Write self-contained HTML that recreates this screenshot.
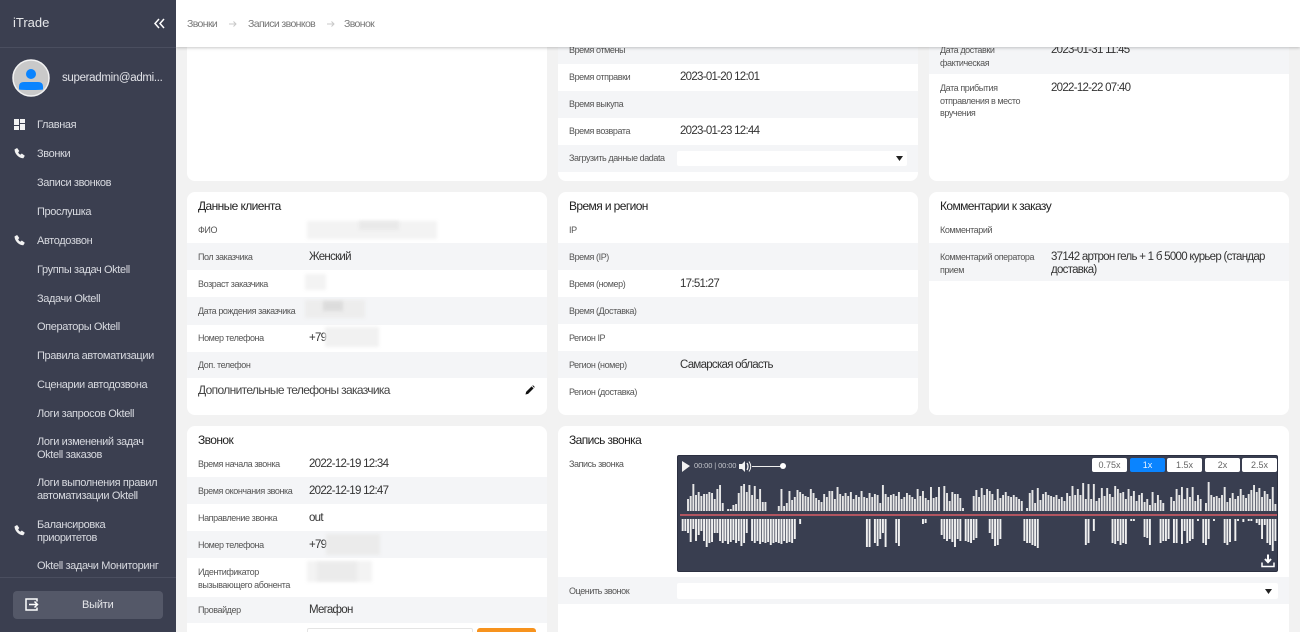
<!DOCTYPE html>
<html lang="ru"><head><meta charset="utf-8"><title>Звонок</title>
<style>
html,body{margin:0;padding:0;width:1300px;height:632px;overflow:hidden;background:#f2f2f2;font-family:"Liberation Sans",sans-serif}
div,span{position:absolute;box-sizing:border-box}
#root{left:0;top:0;width:1300px;height:632px;overflow:hidden;background:#f2f2f2}
.t{white-space:nowrap;line-height:14px}
.l{font-size:9px;color:#555;letter-spacing:-.42px;line-height:12.5px;white-space:nowrap}
.v{font-size:11.5px;color:#333;letter-spacing:-.72px;white-space:nowrap;line-height:14px}
.h{font-size:12px;color:#222;white-space:nowrap;line-height:14px;letter-spacing:-.6px}
.card{background:#fff;border-radius:8px;overflow:hidden}
.s{background:#f4f5f7;left:0;right:0}
.m{font-size:11px;color:#d8dae0;white-space:nowrap;left:37px;line-height:13px;letter-spacing:-.38px;margin-top:1px}
.b{filter:blur(1.5px)}
.sp{top:458px;height:14px;width:35px;background:#fff;border-radius:2px;color:#666;font-size:9px;text-align:center;line-height:14px}
.c{font-size:10.5px;color:#777;top:17px;line-height:14px;white-space:nowrap;letter-spacing:-.62px}
</style></head><body>
<div id="root">

<!-- col 1 row 1 -->
<div class="card" style="left:187px;top:0;width:360px;height:181px"></div>

<!-- col 2 row 1 -->
<div class="card" style="left:558px;top:0;width:360px;height:181px">
<div class="s" style="top:0;height:64px"></div>
<div class="s" style="top:91px;height:27px"></div>
<div class="s" style="top:145px;height:27px"></div>
<div class="l" style="left:11px;top:44px">Время отмены</div>
<div class="l" style="left:11px;top:71px">Время отправки</div>
<div class="v" style="left:122px;top:70px">2023-01-20 12:01</div>
<div class="l" style="left:11px;top:98px">Время выкупа</div>
<div class="l" style="left:11px;top:125px">Время возврата</div>
<div class="v" style="left:122px;top:124px">2023-01-23 12:44</div>
<div class="l" style="left:11px;top:152px">Загрузить данные dadata</div>
<div style="left:119px;top:151px;width:230px;height:15px;background:#fff;border-radius:2px"></div>
<svg style="position:absolute;left:337px;top:156px" width="10" height="5"><path d="M1 0h7L4.500 5z" fill="#222"/></svg>
</div>

<!-- col 3 row 1 -->
<div class="card" style="left:929px;top:0;width:360px;height:181px">
<div class="s" style="top:0;height:74px"></div>
<div class="l" style="left:11px;top:44px">Дата доставки<br>фактическая</div>
<div class="v" style="left:122px;top:43px">2023-01-31 11:45</div>
<div class="l" style="left:11px;top:82px">Дата прибытия<br>отправления в место<br>вручения</div>
<div class="v" style="left:122px;top:81px">2022-12-22 07:40</div>
</div>

<!-- col 1 row 2 -->
<div class="card" style="left:187px;top:192px;width:360px;height:223px">
<div class="s" style="top:51px;height:27px"></div>
<div class="s" style="top:105px;height:28px"></div>
<div class="s" style="top:160px;height:26px"></div>
<div class="h" style="left:11px;top:7px">Данные клиента</div>
<div class="l" style="left:11px;top:32px">ФИО</div>
<div class="b" style="left:120px;top:29px;width:130px;height:18px;background:#f3f3f3"></div>
<div class="b" style="left:172px;top:29px;width:40px;height:9px;background:#e9e9e9"></div>
<div class="l" style="left:11px;top:59px">Пол заказчика</div>
<div class="v" style="left:122px;top:58px">Женский</div>
<div class="l" style="left:11px;top:86px">Возраст заказчика</div>
<div class="b" style="left:118px;top:82px;width:21px;height:16px;background:#f3f3f3"></div>
<div class="l" style="left:11px;top:113px">Дата рождения заказчика</div>
<div class="b" style="left:118px;top:108px;width:60px;height:18px;background:#ededed"></div>
<div class="b" style="left:136px;top:109px;width:20px;height:10px;background:#dcdcdc"></div>
<div class="l" style="left:11px;top:140px">Номер телефона</div>
<div class="v" style="left:122px;top:139px">+79</div>
<div class="b" style="left:138px;top:135px;width:54px;height:20px;background:#f1f1f1"></div>
<div class="l" style="left:11px;top:167px">Доп. телефон</div>
<div class="t" style="left:11px;top:191px;font-size:12px;color:#444;letter-spacing:-.65px">Дополнительные телефоны заказчика</div>
<svg style="position:absolute;left:338px;top:193px" width="10" height="10" viewBox="0 0 10 10"><path d="M0.500 9.500l.6-2.600 5.500-5.500 2 2-5.500 5.500zM7.300.8l.7-.6 1.800 1.800-.7.700z" fill="#111"/></svg>
</div>

<!-- col 2 row 2 -->
<div class="card" style="left:558px;top:192px;width:360px;height:223px">
<div class="s" style="top:51px;height:27px"></div>
<div class="s" style="top:105px;height:27px"></div>
<div class="s" style="top:159px;height:27px"></div>
<div class="h" style="left:11px;top:7px">Время и регион</div>
<div class="l" style="left:11px;top:32px">IP</div>
<div class="l" style="left:11px;top:59px">Время (IP)</div>
<div class="l" style="left:11px;top:86px">Время (номер)</div>
<div class="v" style="left:122px;top:85px">17:51:27</div>
<div class="l" style="left:11px;top:113px">Время (Доставка)</div>
<div class="l" style="left:11px;top:140px">Регион IP</div>
<div class="l" style="left:11px;top:167px">Регион (номер)</div>
<div class="v" style="left:122px;top:166px">Самарская область</div>
<div class="l" style="left:11px;top:194px">Регион (доставка)</div>
</div>

<!-- col 3 row 2 -->
<div class="card" style="left:929px;top:192px;width:360px;height:223px">
<div class="s" style="top:51px;height:38px"></div>
<div class="h" style="left:11px;top:7px">Комментарии к заказу</div>
<div class="l" style="left:11px;top:32px">Комментарий</div>
<div class="l" style="left:11px;top:59px">Комментарий оператора<br>прием</div>
<div class="v" style="left:122px;top:59px;line-height:12.500px">37142 артрон гель + 1 б 5000 курьер (стандар<br>доставка)</div>
</div>

<!-- col 1 row 3 -->
<div class="card" style="left:187px;top:426px;width:360px;height:220px">
<div class="s" style="top:51px;height:27px"></div>
<div class="s" style="top:105px;height:27px"></div>
<div class="s" style="top:171px;height:26px"></div>
<div class="h" style="left:11px;top:7px">Звонок</div>
<div class="l" style="left:11px;top:32px">Время начала звонка</div>
<div class="v" style="left:122px;top:31px">2022-12-19 12:34</div>
<div class="l" style="left:11px;top:59px">Время окончания звонка</div>
<div class="v" style="left:122px;top:58px">2022-12-19 12:47</div>
<div class="l" style="left:11px;top:86px">Направление звонка</div>
<div class="v" style="left:122px;top:85px">out</div>
<div class="l" style="left:11px;top:113px">Номер телефона</div>
<div class="v" style="left:122px;top:112px">+79</div>
<div class="b" style="left:139px;top:108px;width:54px;height:21px;background:#ebebeb"></div>
<div class="l" style="left:11px;top:140px;line-height:13px">Идентификатор<br>вызывающего абонента</div>
<div class="b" style="left:120px;top:135px;width:65px;height:21px;background:#f3f3f3"></div>
<div class="b" style="left:130px;top:136px;width:40px;height:19px;background:#ebebeb"></div>
<div class="l" style="left:11px;top:178px">Провайдер</div>
<div class="v" style="left:122px;top:177px">Мегафон</div>
<div style="left:120px;top:202px;width:166px;height:16px;border:1px solid #e4e4e4;border-radius:2px"></div>
<div style="left:290px;top:202px;width:59px;height:16px;background:#f7931e;border-radius:3px"></div>
</div>

<!-- col 2-3 row 3 -->
<div class="card" style="left:558px;top:426px;width:731px;height:220px">
<div class="s" style="top:151px;height:27px"></div>
<div class="h" style="left:11px;top:7px">Запись звонка</div>
<div class="l" style="left:11px;top:32px">Запись звонка</div>
<div class="l" style="left:11px;top:159px">Оценить звонок</div>
<div style="left:119px;top:157px;width:601px;height:16px;background:#fff;border-radius:2px"></div>
<svg style="position:absolute;left:706px;top:163px" width="10" height="5"><path d="M1 0h7L4.500 5z" fill="#222"/></svg>
</div>

<!-- player -->
<div style="left:677px;top:455px;width:601px;height:117px;background:#393e50;border:1px solid #2b2f40;border-radius:2px"></div>
<svg style="position:absolute;left:682px;top:460px" width="100" height="13" viewBox="0 0 100 13"><path d="M0 1l8 5-8 6z" fill="#f2f2f2"/><path d="M57 4h3l3-3v11l-3-3h-3z" fill="#f2f2f2"/><path d="M65 3q2 3.500 0 7" fill="none" stroke="#f2f2f2" stroke-width="1.300"/><path d="M67 1.500q3.500 5 0 10" fill="none" stroke="#f2f2f2" stroke-width="1"/><path d="M70 6.500h31" stroke="#eee"/></svg>
<div style="left:780px;top:463px;width:6px;height:6px;border-radius:50%;background:#fff"></div>
<div class="t" style="left:694px;top:459px;font-size:7.500px;color:#c4c6cc;letter-spacing:-.1px">00:00 | 00:00</div>

<svg style="position:absolute;left:680px;top:481px" width="597" height="70" viewBox="0 0 223.600 70" preserveAspectRatio="none">
<path fill="none" stroke="#e6e6e6" stroke-width=".72" d="M3 30V18M4 30V15M5 30V3M6 30V14M7 30V11M8 30V15M9 30V13M10 30V13M11 30V11M12 30V12M13 30V18M14 30V8M15 30V4M16 30V22M18 30V28M19 30V28M20 30V24M21 30V23M22 30V12M23 30V5M24 30V3M25 30V11M26 30V4M27 30V14M28 30V5M29 30V18M30 30V8M31 30V21M32 30V21M37 30V25M38 30V8M39 30V25M40 30V22M41 30V10M42 30V19M43 30V16M44 30V9M45 30V11M46 30V13M47 30V15M48 30V16M49 30V8M50 30V12M51 30V17M52 30V19M53 30V21M54 30V13M55 30V16M56 30V10M57 30V10M58 30V18M59 30V6M60 30V13M61 30V15M62 30V12M63 30V15M64 30V11M65 30V18M66 30V14M67 30V16M68 30V10M69 30V16M70 30V17M71 30V12M72 30V16M73 30V13M74 30V14M75 30V22M76 30V4M77 30V13M78 30V16M79 30V14M80 30V13M81 30V15M82 30V11M83 30V18M84 30V16M85 30V12M86 30V14M87 30V16M88 30V18M89 30V8M90 30V15M91 30V10M92 30V17M93 30V19M94 30V6M95 30V17M96 30V16M97 30V6M99 30V5M100 30V12M101 30V20M102 30V11M103 30V13M104 30V13M105 30V17M106 30V27M110 30V15M111 30V9M112 30V16M113 30V7M114 30V14M115 30V8M116 30V10M117 30V13M118 30V19M119 30V8M120 30V17M121 30V14M122 30V11M123 30V15M124 30V16M125 30V14M126 30V16M127 30V18M128 30V20M130 30V27M131 30V12M132 30V9M133 30V22M134 30V7M135 30V19M136 30V13M137 30V11M138 30V14M139 30V15M140 30V16M141 30V14M142 30V18M143 30V16M144 30V20M145 30V12M146 30V15M147 30V5M148 30V14M149 30V8M150 30V14M151 30V2M152 30V18M153 30V3M154 30V18M155 30V3M156 30V20M157 30V17M158 30V7M159 30V15M160 30V7M161 30V13M162 30V16M163 30V5M164 30V8M165 30V12M166 30V11M167 30V18M168 30V8M169 30V15M170 30V10M171 30V20M172 30V14M173 30V12M174 30V21M175 30V18M176 30V24M177 30V11M178 30V22M179 30V14M180 30V19M181 30V22M184 30V16M185 30V20M186 30V8M187 30V14M188 30V6M189 30V18M190 30V7M191 30V16M192 30V6M193 30V20M194 30V14M195 30V18M197 30V22M198 30V1M199 30V14M200 30V16M201 30V15M202 30V17M203 30V14M204 30V6M205 30V21M206 30V17M207 30V12M208 30V18M209 30V15M210 30V8M211 30V14M212 30V17M213 30V13M214 30V9M215 30V4M216 30V11M217 30V7M218 30V16M219 30V10M220 30V13M221 30V18M222 30V6M223 30V23"/>
<path fill="none" stroke="#f0f0f0" stroke-width=".72" d="M1 38V50M2 38V50M3 38V52M4 38V61M5 38V48M6 38V60M7 38V54M8 38V50M9 38V60M10 38V66M11 38V62M12 38V61M13 38V52M14 38V52M15 38V60M16 38V62M17 38V60M18 38V63M19 38V61M20 38V59M21 38V62M22 38V60M23 38V65M24 38V62M25 38V52M27 38V60M28 38V62M29 38V60M30 38V63M31 38V61M32 38V62M33 38V61M34 38V64M35 38V62M36 38V61M37 38V62M38 38V63M39 38V60M40 38V62M41 38V61M42 38V62M43 38V58M45 38V43M70 38V66M71 38V66M73 38V62M74 38V65M75 38V58M76 38V52M77 38V66M81 38V62M82 38V65M91 38V43M92 38V42M98 38V54M99 38V58M100 38V60M101 38V58M102 38V61M103 38V66M104 38V58M105 38V60M107 38V60M108 38V61M109 38V62M110 38V59M111 38V57M116 38V52M117 38V58M118 38V65M119 38V64M120 38V58M129 38V60M130 38V62M131 38V62M132 38V64M133 38V65M134 38V67M152 38V64M153 38V62M155 38V50M162 38V62M163 38V63M164 38V60M165 38V64M166 38V62M167 38V63M169 38V40M170 38V40M174 38V56M175 38V57M176 38V64M180 38V62M181 38V60M182 38V60M183 38V58M185 38V62M186 38V62M188 38V63M189 38V50M190 38V62M191 38V60M192 38V58M194 38V40M196 38V62M197 38V64M198 38V58M200 38V40M204 38V62M205 38V64M206 38V61M208 38V60M209 38V40M211 38V41M213 38V40M214 38V40M216 38V42M217 38V44M218 38V58M219 38V44M220 38V62M221 38V64M222 38V70M223 38V60"/>
<path d="M0 34H223.600" stroke="#b25560" stroke-width="2"/>
</svg>

<div class="sp" style="left:1092px">0.75x</div>
<div class="sp" style="left:1130px;background:#0a84ff;color:#e8f2ff">1x</div>
<div class="sp" style="left:1167px">1.5x</div>
<div class="sp" style="left:1205px">2x</div>
<div class="sp" style="left:1242px">2.5x</div>
<svg style="position:absolute;left:1261px;top:554px" width="14" height="14" viewBox="0 0 14 14"><path d="M7 0.500v7M4 5l3 3.200L10 5" fill="none" stroke="#fff" stroke-width="2"/><path d="M1 8.500v4h12v-4" fill="none" stroke="#fff" stroke-width="1.500"/></svg>

<!-- header -->
<div style="left:176px;top:0;width:1124px;height:47px;background:#fff;box-shadow:0 1px 3px rgba(0,0,0,.22)"></div>
<div class="c" style="left:187px">Звонки</div>
<svg style="position:absolute;left:228px;top:20px" width="10" height="8" viewBox="0 0 10 8"><path d="M1 4h7M5.500 1.500L8 4 5.500 6.500" fill="none" stroke="#c8c8c8"/></svg>
<div class="c" style="left:248px">Записи звонков</div>
<svg style="position:absolute;left:326px;top:20px" width="10" height="8" viewBox="0 0 10 8"><path d="M1 4h7M5.500 1.500L8 4 5.500 6.500" fill="none" stroke="#c8c8c8"/></svg>
<div class="c" style="left:344px">Звонок</div>

<!-- sidebar -->
<div style="left:0;top:0;width:176px;height:632px;background:#3b3f50">
<div style="left:0;top:47px;width:176px;height:1px;background:#4a4e5f"></div>
<div class="t" style="left:13px;top:16px;font-size:13px;color:#e6e7ea">iTrade</div>
<svg style="position:absolute;left:154px;top:18px" width="11" height="11" viewBox="0 0 11 11"><path d="M5 1L1 5.500 5 10M10 1L6 5.500 10 10" fill="none" stroke="#fff" stroke-width="1.500"/></svg>
<svg style="position:absolute;left:12px;top:59px" width="38" height="38" viewBox="0 0 38 38"><circle cx="19" cy="19" r="18" fill="#c9c9c9" stroke="#f2f2f2" stroke-width="1.500"/><circle cx="19" cy="15" r="5" fill="#0a84ff"/><path d="M7 30.500v-3q0-4.500 5-4.500h14q5 0 5 4.500v3q-3 .5-12 .5t-12-.5z" fill="#0a84ff"/></svg>
<div class="t" style="left:62px;top:71px;font-size:11.500px;color:#e2e3e8;letter-spacing:-.32px">superadmin@admi...</div>

<svg style="position:absolute;left:14px;top:119px" width="11" height="11" viewBox="0 0 11 11"><path d="M0 0h5v6H0zM6 0h5v4H6zM0 7h5v4H0zM6 5h5v6H6z" fill="#f2f2f2"/></svg>
<div class="m" style="top:118px">Главная</div>
<svg style="position:absolute;left:14px;top:148px" width="11" height="11" viewBox="0 0 24 24"><path d="M6.600 1l4 5.500-2.500 3c1 2.500 3.500 5 6 6l3-2.500 5.500 4-2.500 4.500C11 22 2 12 2 3.500z" fill="#f2f2f2" stroke="#f2f2f2" stroke-width="1.500"/></svg>
<div class="m" style="top:147px">Звонки</div>
<div class="m" style="top:176px">Записи звонков</div>
<div class="m" style="top:205px">Прослушка</div>
<svg style="position:absolute;left:14px;top:235px" width="11" height="11" viewBox="0 0 24 24"><path d="M6.600 1l4 5.500-2.500 3c1 2.500 3.500 5 6 6l3-2.500 5.500 4-2.500 4.500C11 22 2 12 2 3.500z" fill="#f2f2f2" stroke="#f2f2f2" stroke-width="1.500"/></svg>
<div class="m" style="top:234px">Автодозвон</div>
<div class="m" style="top:263px">Группы задач Oktell</div>
<div class="m" style="top:292px">Задачи Oktell</div>
<div class="m" style="top:320px">Операторы Oktell</div>
<div class="m" style="top:349px">Правила автоматизации</div>
<div class="m" style="top:378px">Сценарии автодозвона</div>
<div class="m" style="top:407px">Логи запросов Oktell</div>
<div class="m" style="top:435px">Логи изменений задач<br>Oktell заказов</div>
<div class="m" style="top:476px">Логи выполнения правил<br>автоматизации Oktell</div>
<svg style="position:absolute;left:14px;top:525px" width="11" height="11" viewBox="0 0 24 24"><path d="M6.600 1l4 5.500-2.500 3c1 2.500 3.500 5 6 6l3-2.500 5.500 4-2.500 4.500C11 22 2 12 2 3.500z" fill="#f2f2f2" stroke="#f2f2f2" stroke-width="1.500"/></svg>
<div class="m" style="top:518px">Балансировка<br>приоритетов</div>
<div class="m" style="top:559px">Oktell задачи Мониторинг</div>
<div style="left:0;top:577px;width:176px;height:1px;background:#4a4e5f"></div>
<div style="left:13px;top:591px;width:150px;height:28px;background:#545868;border-radius:4px"></div>
<svg style="position:absolute;left:25px;top:598px" width="14" height="13" viewBox="0 0 14 13"><path d="M12 3.500V1H1v11h11V9.500" fill="none" stroke="#fff" stroke-width="1.500"/><path d="M4 6.500h8M9.500 3.500l3 3-3 3" fill="none" stroke="#fff" stroke-width="1.500"/></svg>
<div class="t" style="left:82px;top:598px;font-size:11px;color:#e6e7ea;letter-spacing:-.2px">Выйти</div>
</div>
</div>
</body></html>
